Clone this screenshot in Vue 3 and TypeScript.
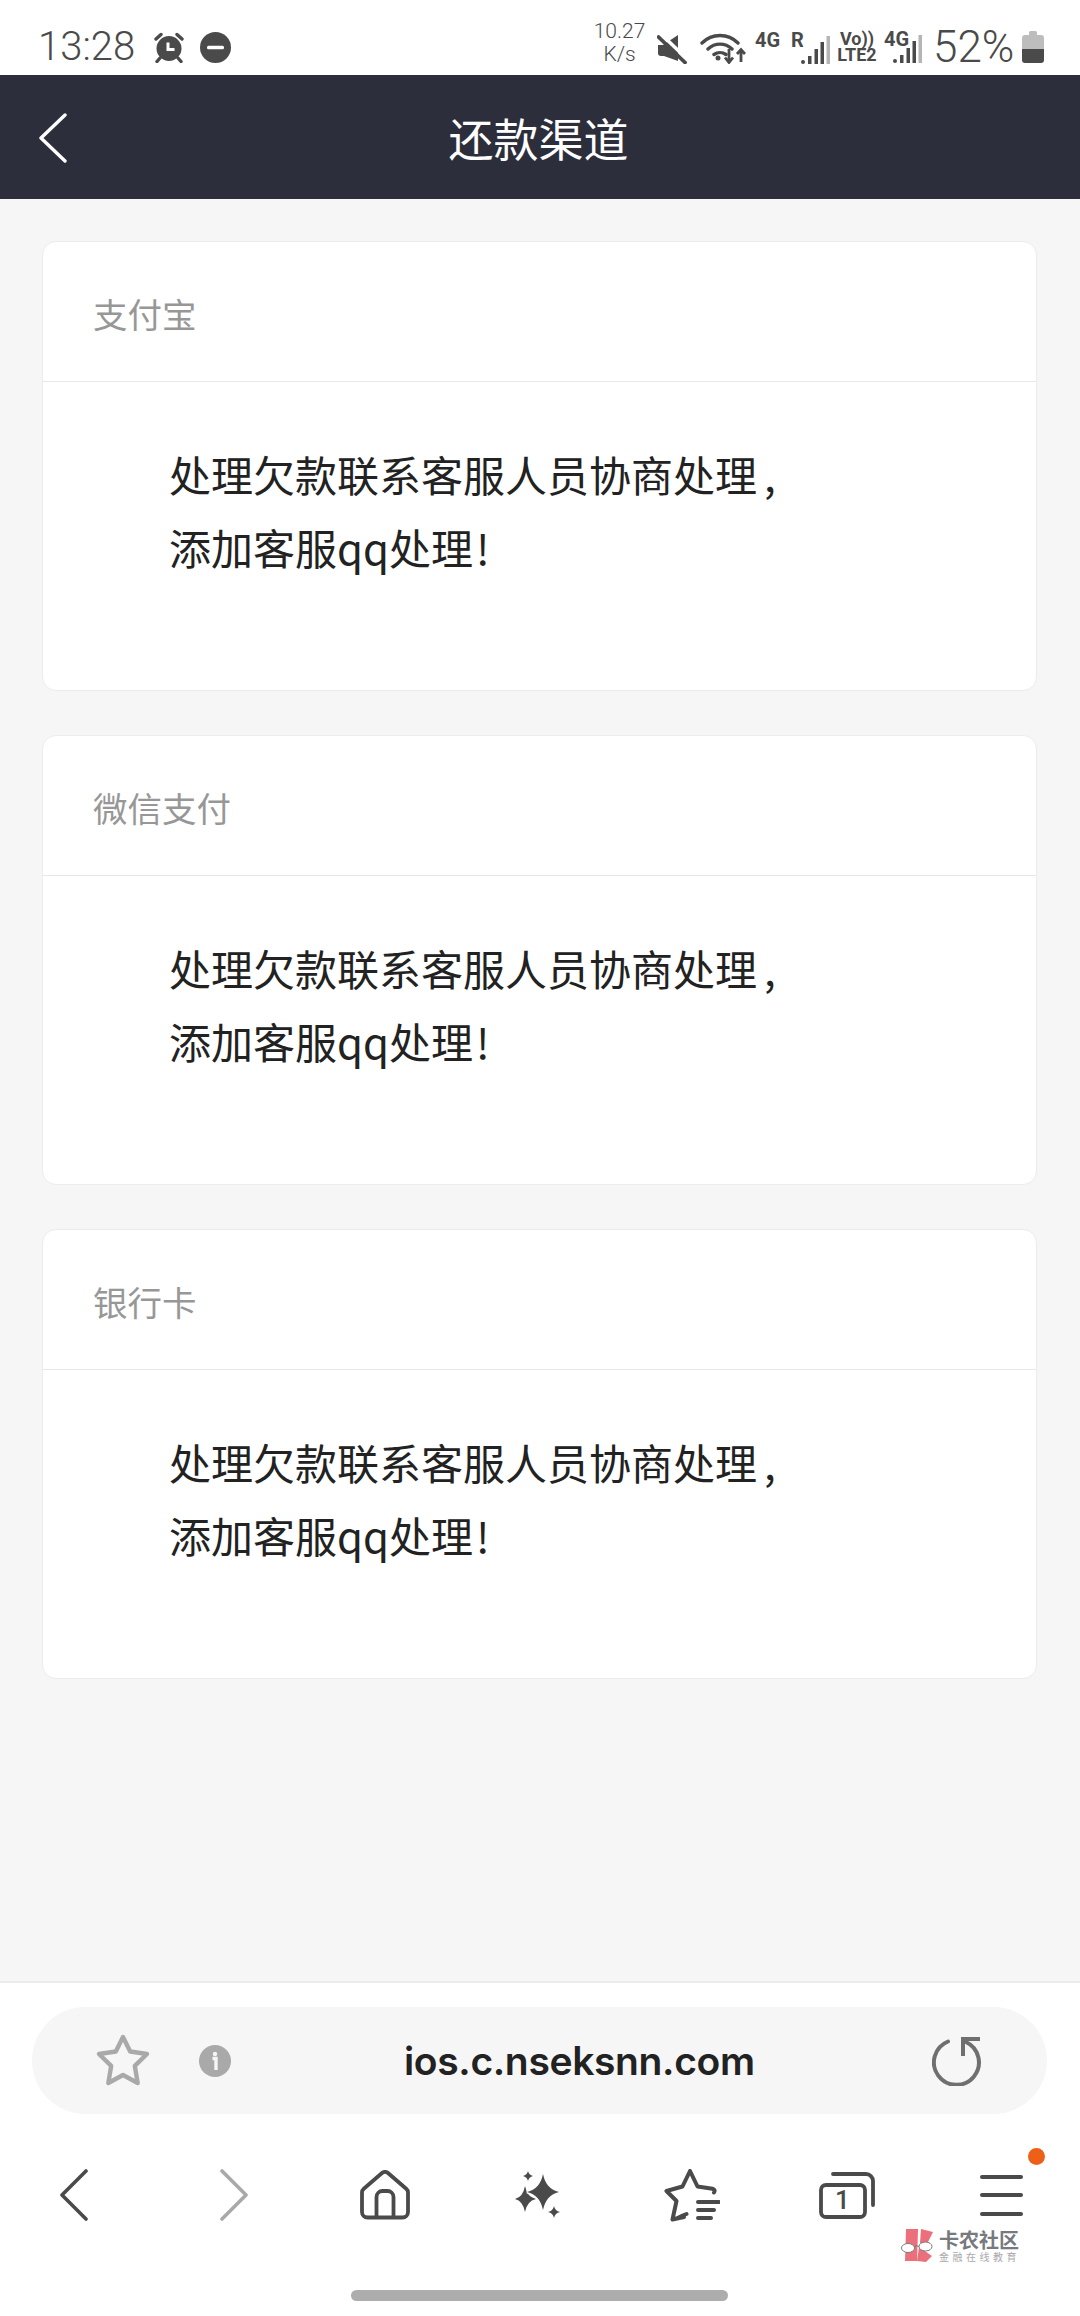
<script setup lang="ts">
const channels: string[] = ['支付宝', '微信支付', '银行卡']
</script>

<template>
  <div class="phone">
    <div class="status">
      <div class="status-left">
        <span class="clock">13:28</span>
        <svg class="alarm" width="32" height="31" viewBox="0 0 32 31">
          <circle cx="16" cy="16.500" r="12.500" fill="#4a4a4a" />
          <path d="M3 7 8 2.500M29 7 24 2.500M7 26l-3 3.500M25 26l3 3.500" stroke="#4a4a4a" stroke-width="3.400" stroke-linecap="round" fill="none" />
          <path d="M15 10.500v7h6.500" stroke="#fff" stroke-width="3" fill="none" />
        </svg>
        <svg class="dnd" width="31" height="31" viewBox="0 0 31 31">
          <circle cx="15.500" cy="15.500" r="15.500" fill="#4a4a4a" />
          <rect x="7" y="13.800" width="17" height="3.400" rx="1.500" fill="#fff" />
        </svg>
      </div>
      <div class="status-right">
        <div class="speed"><span>10.27</span><span>K/s</span></div>
        <svg class="mute" width="30" height="30" viewBox="0 0 30 30">
          <path d="M1 11h5L21 1v26L7 22H4a3 3 0 0 1-3-3z" fill="#4a4a4a" />
          <path d="M4 0 31 26" stroke="#fff" stroke-width="3.500" />
          <path d="M1.500 3 28 28.500" stroke="#4a4a4a" stroke-width="3.800" stroke-linecap="round" />
        </svg>
        <svg class="wifi" width="46" height="32" viewBox="0 0 46 32">
          <path d="M2 11C12 1 28 1 38 11M8 17c7-6.500 17-6.500 24 0M14 22.500c3.500-2.500 8.500-2.500 12 0" stroke="#4a4a4a" stroke-width="3.400" stroke-linecap="round" fill="none" />
          <circle cx="18" cy="26" r="2.500" fill="#4a4a4a" />
          <path d="M29 17v13M25 25.500l4 5 4-5M41 30V18M37 22l4-4.500 4 4.500" stroke="#4a4a4a" stroke-width="2.800" fill="none" />
        </svg>
        <div class="net net-one">
          <div class="net-labels"><span>4G</span><span>R</span></div>
          <svg class="bars" width="29" height="28" viewBox="0 0 29 28">
            <rect x="0" y="24" width="4" height="4" rx="2" fill="#4a4a4a" />
            <rect x="7" y="20" width="3.500" height="8" fill="#4a4a4a" />
            <rect x="13.500" y="13" width="3.500" height="15" fill="#4a4a4a" />
            <rect x="19.500" y="6" width="3.500" height="22" fill="#4a4a4a" />
            <rect x="25.500" y="0" width="3.500" height="28" fill="#b5b5b5" />
          </svg>
        </div>
        <div class="volte"><span>Vo))</span><span>LTE2</span></div>
        <div class="net net-two">
          <div class="net-labels"><span>4G</span></div>
          <svg class="bars" width="29" height="28" viewBox="0 0 29 28">
            <rect x="0" y="24" width="4" height="4" rx="2" fill="#4a4a4a" />
            <rect x="7" y="20" width="3.500" height="8" fill="#4a4a4a" />
            <rect x="13.500" y="13" width="3.500" height="15" fill="#4a4a4a" />
            <rect x="19.500" y="6" width="3.500" height="22" fill="#4a4a4a" />
            <rect x="25.500" y="0" width="3.500" height="28" fill="#b5b5b5" />
          </svg>
        </div>
        <span class="percent">52%</span>
        <svg class="battery" width="22" height="32" viewBox="0 0 22 32">
          <path d="M7 1.500a1.500 1.500 0 0 1 1.500-1.500h5A1.500 1.500 0 0 1 15 1.500V4h4a3 3 0 0 1 3 3v12H0V7a3 3 0 0 1 3-3h4z" fill="#bdbdbd" />
          <path d="M0 18h22v11a3 3 0 0 1-3 3H3a3 3 0 0 1-3-3z" fill="#4a4a4a" />
        </svg>
      </div>
    </div>

    <header class="topbar">
      <svg class="top-back" width="30" height="50" viewBox="0 0 30 50">
        <path d="M27 2 3 25l24 23" stroke="#fff" stroke-width="3.400" stroke-linecap="round" stroke-linejoin="round" fill="none" />
      </svg>
      <h1 class="title">还款渠道</h1>
    </header>

    <main class="content">
      <section v-for="name in channels" :key="name" class="card">
        <div class="card-head">{{ name }}</div>
        <div class="card-body">
          <p>处理欠款联系客服人员协商处理<span class="comma">,</span></p>
          <p>添加客服qq处理<span class="bang">!</span></p>
        </div>
      </section>
    </main>

    <footer class="browser">
      <div class="urlbar">
        <svg class="fav" width="56" height="54" viewBox="0 0 56 54">
          <path d="M28 3 35.200 17.500 52 20 39.800 31.800 42.700 49 28 41 13.300 49 16.200 31.800 4 20 20.800 17.500z" stroke="#a9a9a9" stroke-width="4.400" stroke-linejoin="round" fill="none" />
        </svg>
        <svg class="info" width="32" height="32" viewBox="0 0 32 32">
          <circle cx="16" cy="16" r="16" fill="#a9a9a9" />
          <circle cx="16" cy="9" r="2.200" fill="#f6f6f6" />
          <path d="M13.500 13.500H17V25" stroke="#f6f6f6" stroke-width="3.400" fill="none" />
        </svg>
        <span class="url">ios.c.nseksnn.com</span>
        <svg class="reload" width="50" height="50" viewBox="0 0 50 50">
          <path d="M16 5.500A22.500 22.500 0 1 0 34 6" stroke="#6f6f6f" stroke-width="4" stroke-linecap="round" fill="none" />
          <path d="M31 20V3h17" stroke="#6f6f6f" stroke-width="4" fill="none" />
        </svg>
      </div>
      <nav class="tools">
        <div class="tool">
          <svg width="28" height="52" viewBox="0 0 28 52">
            <path d="M26 2 2 26l24 24" stroke="#4a4a4a" stroke-width="3.600" stroke-linecap="round" stroke-linejoin="round" fill="none" />
          </svg>
        </div>
        <div class="tool nudge-forward">
          <svg width="28" height="52" viewBox="0 0 28 52">
            <path d="M2 2l24 24L2 50" stroke="#a9a9a9" stroke-width="3.600" stroke-linecap="round" stroke-linejoin="round" fill="none" />
          </svg>
        </div>
        <div class="tool nudge-home">
          <svg width="50" height="50" viewBox="0 0 50 50">
            <path d="M2 22.500a5 5 0 0 1 1.800-3.800L22 3a4.500 4.500 0 0 1 6 0l18.200 15.700a5 5 0 0 1 1.800 3.800V42a5.500 5.500 0 0 1-5.500 5.500h-35A5.500 5.500 0 0 1 2 42z" stroke="#4a4a4a" stroke-width="3.800" fill="none" />
            <path d="M16.500 47V27a6 6 0 0 1 6-6h5a6 6 0 0 1 6 6v20" stroke="#4a4a4a" stroke-width="3.800" fill="none" />
          </svg>
        </div>
        <div class="tool">
          <svg width="46" height="50" viewBox="0 0 46 50">
            <path d="M10 16Q12 27 21 29 12 31 10 42 8 31 0 29 8 27 10 16z" fill="#4a4a4a" />
            <path d="M28 4Q31 19 44 22 31 25 28 40 25 25 12 22 25 19 28 4z" fill="#4a4a4a" stroke="#fff" stroke-width="3" paint-order="stroke" />
            <path d="M13 1Q13.900 5.100 18 6 13.900 6.900 13 11 12.100 6.900 8 6 12.100 5.100 13 1z" fill="#4a4a4a" />
            <path d="M39 36Q40 41 45 42 40 43 39 48 38 43 33 42 38 41 39 36z" fill="#4a4a4a" />
          </svg>
        </div>
        <div class="tool">
          <svg width="56" height="54" viewBox="0 0 56 54">
            <path d="M26 3 33.500 18.500 48.500 20.800C51 21.500 51 23 50 24.500M20 49 8.500 51.500 12.500 33 2.500 23 18.500 18.500 26 3M8.500 51.500c3 0 10-4 14-5.500" stroke="#4a4a4a" stroke-width="4" stroke-linecap="round" stroke-linejoin="round" fill="none" />
            <path d="M34 34h21M34 42h16M34 50h13" stroke="#4a4a4a" stroke-width="4" stroke-linecap="round" />
          </svg>
        </div>
        <div class="tool tabs">
          <svg width="56" height="48" viewBox="0 0 56 48">
            <rect x="2" y="14" width="44" height="32" rx="5" stroke="#4a4a4a" stroke-width="3.800" fill="none" />
            <path d="M14 3h33a7 7 0 0 1 7 7v24" stroke="#4a4a4a" stroke-width="3.800" stroke-linecap="round" fill="none" />
          </svg>
          <span class="tab-count">1</span>
        </div>
        <div class="tool menu">
          <span></span><span></span><span></span>
          <i class="dot"></i>
        </div>
      </nav>
      <div class="watermark">
        <svg width="36" height="36" viewBox="0 0 36 36">
          <path d="M6 1h12l-1 32H5z" fill="#ec6f7c" />
          <path d="M21 1 33 4l-7 14-6-3z" fill="#ec6f7c" />
          <path d="M19 19 32 28l-6 6-9-1z" fill="#ec6f7c" />
          <ellipse cx="8" cy="20" rx="6.500" ry="4.500" fill="#fff" stroke="#7a7a7a" stroke-width="1" />
          <ellipse cx="25.500" cy="18.500" rx="6.500" ry="4.500" fill="#fff" stroke="#7a7a7a" stroke-width="1" />
          <path d="M14 18.500q2.500-1.500 5 0" stroke="#7a7a7a" stroke-width="1" fill="none" />
        </svg>
        <div class="mark-text">
          <span class="mark-main">卡农社区</span>
          <span class="mark-sub">金融在线教育</span>
        </div>
      </div>
      <div class="home-bar"></div>
    </footer>
  </div>
</template>

<style scoped>
.phone {
  width: 1080px;
  height: 2316px;
  display: flex;
  flex-direction: column;
  background: #f6f6f6;
  overflow: hidden;
  font-family: "Noto Sans CJK SC", "Noto Sans", sans-serif;
}
.status {
  height: 75px;
  box-sizing: border-box;
  background: #fff;
  display: flex;
  align-items: center;
  justify-content: space-between;
  padding: 19px 36px 0 38px;
  color: #4a4a4a;
  font-family: Roboto, sans-serif;
}
.status-left,
.status-right {
  display: flex;
  align-items: center;
}
.clock {
  font-size: 40px;
  font-weight: 300;
  line-height: 56px;
  width: 95px;
}
.alarm { margin-left: 20px; }
.dnd { margin-left: 15px; }
.speed {
  width: 49px;
  display: flex;
  flex-direction: column;
  align-items: center;
  font-size: 21px;
  line-height: 23px;
  font-weight: 300;
  margin-top: -8px;
}
.mute { margin-left: 13px; margin-top: 4px; }
.wifi { margin-left: 13px; margin-top: 2px; }
.net {
  display: grid;
  height: 32px;
  font-size: 20px;
  font-weight: 700;
}
.net > * { grid-area: 1 / 1; }
.net-labels {
  display: flex;
  line-height: 16px;
  align-self: start;
}
.bars {
  align-self: end;
  justify-self: end;
}
.net-one {
  width: 75px;
  margin-left: 9px;
  margin-top: 2px;
}
.net-one .net-labels { gap: 11px; }
.net-two {
  width: 38px;
  margin-left: 7px;
}
.volte {
  width: 40px;
  margin-left: 7px;
  display: flex;
  flex-direction: column;
  align-items: center;
  font-size: 18px;
  font-weight: 700;
  line-height: 16px;
  white-space: nowrap;
}
.percent {
  margin-left: 11px;
  font-size: 44px;
  font-weight: 300;
  line-height: 56px;
  width: 82px;
  white-space: nowrap;
}
.battery { margin-left: 7px; }
.topbar {
  height: 124px;
  background: #2c2e3c;
  display: flex;
  align-items: center;
  justify-content: center;
  position: relative;
  padding-right: 3px;
}
.top-back {
  position: absolute;
  left: 38px;
  top: 38px;
}
.title {
  margin: 0;
  font-size: 45px;
  font-weight: 400;
  color: #fff;
}
.content {
  flex: 1;
  display: flex;
  flex-direction: column;
  gap: 44px;
  padding: 42px 43px 0 42px;
}
.card {
  height: 450px;
  box-sizing: border-box;
  background: #fff;
  border: 1px solid #ececec;
  border-radius: 14px;
}
.card-head {
  height: 140px;
  box-sizing: border-box;
  padding: 2px 0 0 50px;
  border-bottom: 1px solid #e8e8e8;
  display: flex;
  align-items: center;
  font-size: 34.500px;
  color: #979797;
}
.card-body {
  padding: 56px 0 0 126px;
  font-size: 42px;
  line-height: 72.500px;
  color: #222;
}
.card-body p { margin: 0; }
.comma { margin-left: 7px; }
.bang { margin-left: 3px; }
.browser {
  position: relative;
  height: 335px;
  box-sizing: border-box;
  background: #fff;
  border-top: 2px solid #ececec;
  padding-top: 24px;
}
.urlbar {
  height: 107px;
  margin: 0 33px 0 32px;
  border-radius: 54px;
  background: #f6f6f6;
  display: flex;
  align-items: center;
}
.fav { margin-left: 63px; }
.info { margin-left: 48px; }
.url {
  margin-left: 173px;
  font-family: Inter, sans-serif;
  font-size: 39px;
  font-weight: 600;
  letter-spacing: -0.350px;
  color: #222;
  white-space: nowrap;
  width: 352px;
}
.reload { margin-left: 176px; }
.tools {
  display: grid;
  grid-template-columns: repeat(7, 154.500px);
  justify-content: center;
  padding-right: 5px;
  margin-top: 53px;
  height: 56px;
}
.tool {
  display: flex;
  align-items: center;
  justify-content: center;
  position: relative;
}
.nudge-forward { left: 5px; }
.nudge-home { left: 2px; }
.tabs { display: grid; place-items: center; }
.tabs > * { grid-area: 1 / 1; }
.tab-count {
  font-family: Roboto, sans-serif;
  font-size: 26px;
  font-weight: 500;
  line-height: 30px;
  color: #4a4a4a;
  margin: 10px 8px 0 0;
}
.menu {
  flex-direction: column;
  gap: 14.500px;
}
.menu span {
  width: 43px;
  height: 4px;
  border-radius: 2px;
  background: #4a4a4a;
}
.dot {
  position: absolute;
  left: 104px;
  top: -19px;
  width: 17px;
  height: 17px;
  border-radius: 50%;
  background: #ee6018;
}
.watermark {
  position: absolute;
  left: 900px;
  top: 245px;
  display: flex;
  gap: 3px;
  align-items: center;
}
.mark-text {
  display: flex;
  flex-direction: column;
}
.mark-main {
  font-size: 20px;
  line-height: 22px;
  font-weight: 700;
  color: #77797e;
  white-space: nowrap;
}
.mark-sub {
  font-size: 10px;
  line-height: 12px;
  letter-spacing: 3.500px;
  color: #a8a8a8;
  white-space: nowrap;
}
.home-bar {
  position: absolute;
  left: 351px;
  top: 307px;
  width: 377px;
  height: 11px;
  border-radius: 6px;
  background: #adadad;
}
</style>
